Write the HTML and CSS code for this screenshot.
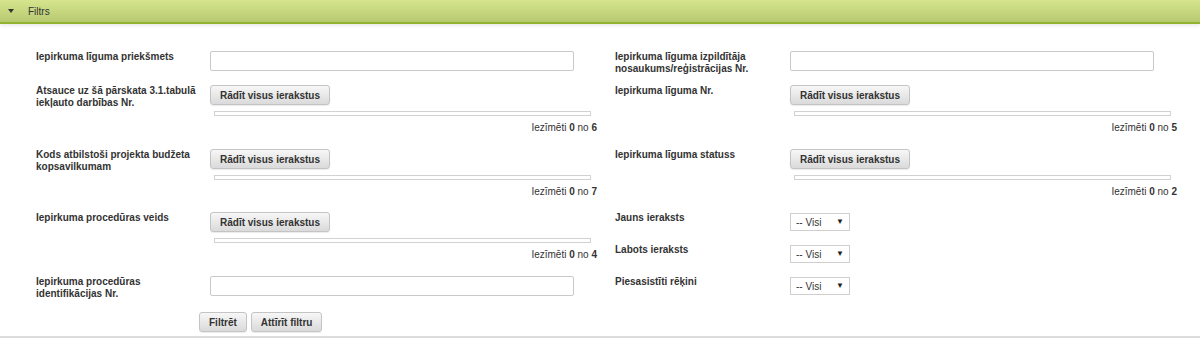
FILE: index.html
```html
<!DOCTYPE html>
<html lang="lv">
<head>
<meta charset="UTF-8">
<title>Filtrs</title>
<link rel="stylesheet" href="styles.css">
</head>
<body>

<div class="panel">
  <div class="panel-head">
    <span class="caret"></span>
    <span class="panel-title">Filtrs</span>
  </div>

  <div class="panel-body">
    <div class="filter-grid">
      <!-- rinda 1 -->
      <div class="lbl r1 c1">Iepirkuma līguma priekšmets</div>
      <div class="ctl r1 c2"><input type="text" class="txt"></div>
      <div class="lbl r1 c3">Iepirkuma līguma izpildītāja nosaukums/reģistrācijas Nr.</div>
      <div class="ctl r1 c4"><input type="text" class="txt"></div>

      <!-- rinda 2 -->
      <div class="lbl r2 c1">Atsauce uz šā pārskata 3.1.tabulā iekļauto darbības Nr.</div>
      <div class="ctl r2 c2">
        <button type="button" class="btn">Rādīt visus ierakstus</button>
        <div class="listbar"></div>
        <div class="count">Iezīmēti <b>0</b> no <b>6</b></div>
      </div>
      <div class="lbl r2 c3">Iepirkuma līguma Nr.</div>
      <div class="ctl r2 c4">
        <button type="button" class="btn">Rādīt visus ierakstus</button>
        <div class="listbar"></div>
        <div class="count">Iezīmēti <b>0</b> no <b>5</b></div>
      </div>

      <!-- rinda 3 -->
      <div class="lbl r3 c1">Kods atbilstoši projekta budžeta kopsavilkumam</div>
      <div class="ctl r3 c2">
        <button type="button" class="btn">Rādīt visus ierakstus</button>
        <div class="listbar"></div>
        <div class="count">Iezīmēti <b>0</b> no <b>7</b></div>
      </div>
      <div class="lbl r3 c3">Iepirkuma līguma statuss</div>
      <div class="ctl r3 c4">
        <button type="button" class="btn">Rādīt visus ierakstus</button>
        <div class="listbar"></div>
        <div class="count">Iezīmēti <b>0</b> no <b>2</b></div>
      </div>

      <!-- rinda 4 -->
      <div class="lbl r4 c1">Iepirkuma procedūras veids</div>
      <div class="ctl r4 c2">
        <button type="button" class="btn">Rādīt visus ierakstus</button>
        <div class="listbar"></div>
        <div class="count">Iezīmēti <b>0</b> no <b>4</b></div>
      </div>
      <div class="lbl r4a c3">Jauns ieraksts</div>
      <div class="ctl r4a c4">
        <span class="sel"><select><option>-- Visi</option></select></span>
      </div>
      <div class="lbl r4b c3">Labots ieraksts</div>
      <div class="ctl r4b c4">
        <span class="sel"><select><option>-- Visi</option></select></span>
      </div>

      <!-- rinda 5 -->
      <div class="lbl r5 c1">Iepirkuma procedūras identifikācijas Nr.</div>
      <div class="ctl r5 c2"><input type="text" class="txt"></div>
      <div class="lbl r5 c3">Piesasistīti rēķini</div>
      <div class="ctl r5 c4">
        <span class="sel"><select><option>-- Visi</option></select></span>
      </div>
    </div>

    <div class="actions">
      <button type="button" class="btn">Filtrēt</button>
      <button type="button" class="btn">Attīrīt filtru</button>
    </div>
  </div>
</div>

</body>
</html>
```

FILE: styles.css
```css
body {
  margin: 0;
  padding: 0;
  background: #fff;
  font-family: "Liberation Sans", Arial, sans-serif;
  font-size: 10px;
  color: #333;
}

.panel {
  border-bottom: 2px solid #dcdcdc;
}

.panel-head {
  height: 22px;
  display: flex;
  align-items: center;
  background: linear-gradient(#d6e58d, #b6c971);
  border-bottom: 2px solid #8fb22f;
  box-shadow: 0 2px 3px rgba(0,0,0,0.08);
}

.caret {
  width: 0;
  height: 0;
  margin-left: 8px;
  border-left: 3px solid transparent;
  border-right: 3px solid transparent;
  border-top: 4px solid #333;
}

.panel-title {
  margin-left: 14px;
  color: #333;
}

.panel-body {
  padding: 27px 0 1px 36px;
}

.filter-grid {
  display: grid;
  grid-template-columns: 174px 405px 175px 386px;
  grid-template-rows: 34px 64px 63px 32px 32px 36px;
}

.c1 { grid-column: 1; }
.c2 { grid-column: 2; }
.c3 { grid-column: 3; }
.c4 { grid-column: 4; }
.r1 { grid-row: 1; }
.r2 { grid-row: 2; }
.r3 { grid-row: 3; }
.r4 { grid-row: 4 / span 2; }
.r4a { grid-row: 4; }
.r4b { grid-row: 5; }
.r5 { grid-row: 6; }

.lbl {
  font-weight: bold;
  line-height: 12px;
  padding-right: 8px;
  color: #333;
}

.ctl {
  width: 387px;
  display: flex;
  flex-direction: column;
  align-items: flex-start;
}

.txt {
  box-sizing: border-box;
  width: 364px;
  height: 20px;
  margin: 0;
  border: 1px solid #c9c9c9;
  border-radius: 2px;
  background: #fff;
}

.btn {
  height: 20px;
  padding: 0 9px;
  margin: 0;
  font-family: "Liberation Sans", Arial, sans-serif;
  font-size: 10px;
  font-weight: bold;
  color: #333;
  background: linear-gradient(#f7f7f7, #dadada);
  border: 1px solid #c4c4c4;
  border-radius: 3px;
  box-shadow: 0 1px 1px rgba(0,0,0,0.08);
}

.listbar {
  box-sizing: border-box;
  width: 377px;
  height: 5px;
  margin: 6px 0 0 4px;
  border: 1px solid #d2d2d2;
  background: #fff;
}

.count {
  align-self: stretch;
  text-align: right;
  margin-top: 6px;
  line-height: 12px;
}

.sel {
  position: relative;
  display: inline-block;
  margin-top: 1px;
}

.sel select {
  appearance: none;
  -webkit-appearance: none;
  box-sizing: border-box;
  width: 60px;
  height: 18px;
  margin: 0;
  padding: 0 0 0 5px;
  font-family: "Liberation Sans", Arial, sans-serif;
  font-size: 10px;
  color: #333;
  background: #fff;
  border: 1px solid #cfcfcf;
  border-radius: 0;
}

.sel::after {
  content: "\25BC";
  position: absolute;
  right: 6px;
  top: 4px;
  font-size: 8px;
  color: #222;
  pointer-events: none;
}

.actions {
  display: flex;
  gap: 4px;
  margin-left: 163px;
  height: 23px;
}
```
